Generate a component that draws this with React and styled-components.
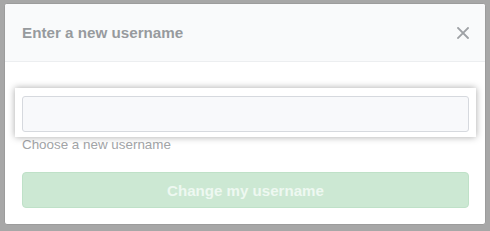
import styled, { createGlobalStyle } from "styled-components"

const Global = createGlobalStyle`
  html, body {
    margin: 0;
    padding: 0;
    background: #a7a7a7;
  }
  body {
    font-family: "Liberation Sans", Arial, sans-serif;
  }
`

const Page = styled.div`
  width: 490px;
  height: 231px;
  padding: 3px 4px 0 4px;
  box-sizing: border-box;
  overflow: hidden;
`

const Dialog = styled.div`
  width: 482px;
  height: 222px;
  box-sizing: border-box;
  background: #fff;
  border: 1px solid #9c9c9c;
  border-radius: 3px;
  display: flex;
  flex-direction: column;
  overflow: hidden;
`

const Header = styled.div`
  height: 58px;
  box-sizing: border-box;
  background: #f9fafb;
  border-bottom: 1px solid #eceef0;
  display: flex;
  align-items: center;
  justify-content: space-between;
  padding: 0 14px 0 17px;
`

const Title = styled.h2`
  margin: 0;
  font-size: 15.2px;
  line-height: 24px;
  font-weight: bold;
  color: #979a9e;
`

const Close = styled.button`
  border: 0;
  background: none;
  padding: 0;
  width: 16px;
  height: 16px;
  display: flex;
  align-items: center;
  justify-content: center;
  color: #9ea1a5;
`

const Body = styled.div`
  padding: 34px 16px 16px 17px;
  display: flex;
  flex-direction: column;
`

const Spotlight = styled.div`
  margin: -8px -7px -5px -7px;
  padding: 8px 7px 5px 7px;
  background: #fff;
  box-shadow: 0 0 7px rgba(0, 0, 0, 0.35);
  position: relative;
  z-index: 1;
`

const Input = styled.input`
  display: block;
  width: 100%;
  height: 36px;
  box-sizing: border-box;
  background: #f8f9fb;
  border: 1px solid #d6d9de;
  border-radius: 3px;
  font-family: inherit;
  font-size: 14px;
  outline: none;
`

const Note = styled.p`
  margin: 3px 0 0 0;
  font-size: 13.4px;
  line-height: 20px;
  color: #a2a4a7;
`

const Button = styled.button`
  margin-top: 17px;
  height: 36px;
  width: 100%;
  box-sizing: border-box;
  background: #cce8d3;
  border: 1px solid #bfe1c8;
  border-radius: 4px;
  color: #eef8f1;
  font-family: inherit;
  font-size: 15.1px;
  font-weight: bold;
`

const App = () => {
  return (
    <Page>
      <Global />
      <Dialog>
        <Header>
          <Title>Enter a new username</Title>
          <Close aria-label="Close">
            <svg width="12" height="12" viewBox="0 0 12 12">
              <path d="M1 1 L11 11 M11 1 L1 11" stroke="currentColor" strokeWidth="1.8" strokeLinecap="square" />
            </svg>
          </Close>
        </Header>
        <Body>
          <Spotlight>
            <Input type="text" />
          </Spotlight>
          <Note>Choose a new username</Note>
          <Button>Change my username</Button>
        </Body>
      </Dialog>
    </Page>
  )
}

export default App
